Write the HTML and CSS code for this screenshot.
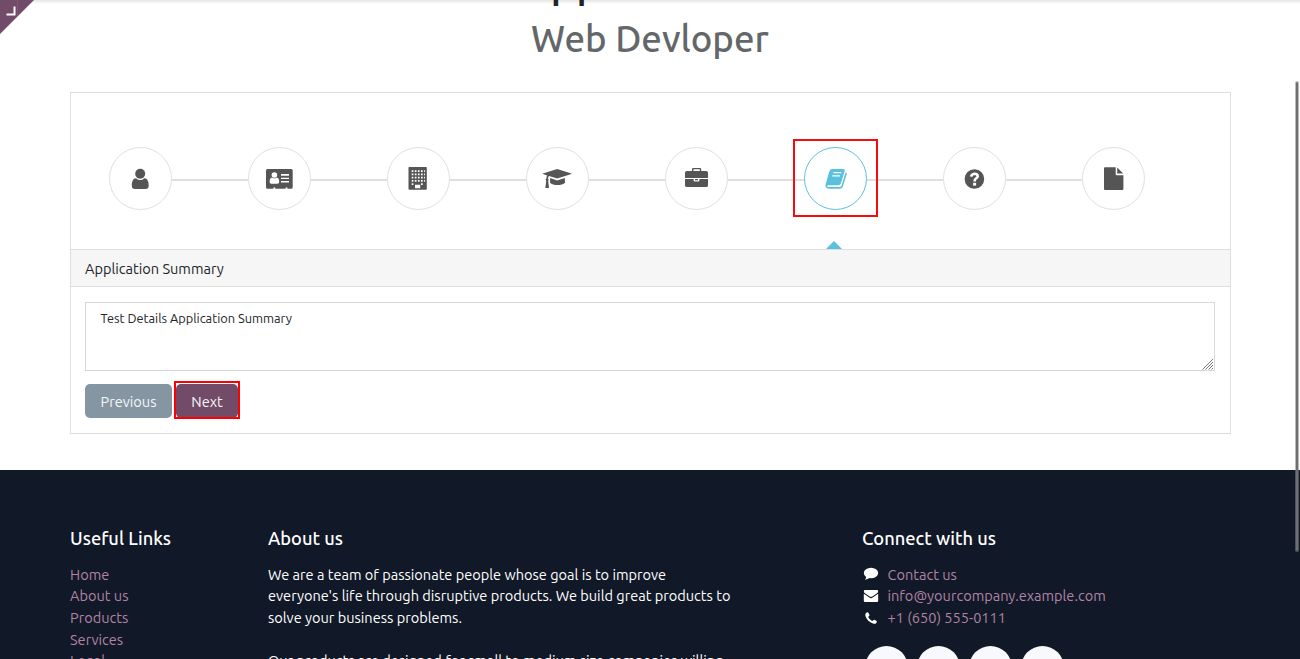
FILE: index.html
```
<!DOCTYPE html>
<html lang="en">
<head>
<meta charset="utf-8">
<title>Job Application Form</title>
<link rel="stylesheet" href="styles.css">
</head>
<body>
<div class="page">
  <div class="top-shadow"></div>
  <div class="corner"><svg width="34" height="34" viewBox="0 0 34 34"><path d="M0 0H34L0 34Z" fill="#714b67"/><path d="M17.5 0V16" stroke="#7c5973"/><path d="M6.5 14.5H14.5V6.5" fill="none" stroke="#fff" stroke-width="2"/></svg></div>
  <header class="heading">
    <h1 class="title">Job Application Form</h1>
    <h2 class="job">Web Devloper</h2>
  </header>

  <main class="card">
    <nav class="steps">
      <a class="step"><svg viewBox="0 0 63 63"><circle cx="31.2" cy="26.8" r="5"/><path d="M27 31.2Q31.2 35 35.4 31.2C38.5 31.2 39.7 34.5 39.7 38.5Q39.7 42 36.5 42H26Q22.8 42 22.8 38.5C22.8 34.5 24 31.2 27 31.2Z"/></svg></a>
      <i class="line"></i>
      <a class="step"><svg viewBox="0 0 63 63"><path d="M19.5 22H43.2Q44.7 22 44.7 23.5V40.3Q44.7 41.8 43.2 41.8H39.4V40.4H37.6V41.8H27.2V40.4H25.4V41.8H19.5Q18 41.8 18 40.3V23.5Q18 22 19.5 22Z"/><g fill="#fff"><circle cx="26.4" cy="28" r="2.8"/><path d="M24 30.4Q26.4 32.3 28.8 30.4Q31.2 30.8 31.2 34.7Q31.2 36.8 29.4 36.8H23.4Q21.6 36.8 21.6 34.7Q21.6 30.8 24 30.4ZM33 26.9H41V28.7H33ZM33 30.8H41V32.1H33ZM33 34.1H41V35.4H33Z"/></g></svg></a>
      <i class="line"></i>
      <a class="step"><svg viewBox="0 0 63 63"><rect x="21.5" y="20" width="18.3" height="22.7" rx=".8"/><g stroke="#fff" stroke-width="1.7" stroke-dasharray="1.7 1.4"><path d="M24.7 24.2H38M24.7 27.4H38M24.7 30.6H38M24.7 33.8H38"/></g><path d="M24.7 36.2H26.4V37.9H24.7ZM34 36.2H35.7V37.9H34ZM28 37.8H33.2V41.3H28Z" fill="#fff"/></svg></a>
      <i class="line"></i>
      <a class="step"><svg viewBox="0 0 63 63"><path d="M31.2 21.9L45.4 26.5Q46 26.8 45.4 27L31.2 31.6L23 29Q22.2 30 22 31.4Q23.3 32.5 22.2 33.9L23 41.1H19.3L20.2 33.9Q19 32.6 20.4 31.4Q20.5 29.6 21.2 28.4L17 27Q16.4 26.8 17 26.5ZM24.2 31.1L31.2 33.4L38.8 31L39 35.7C36 38.9 27 38.9 24 35.7Z"/></svg></a>
      <i class="line"></i>
      <a class="step"><svg viewBox="0 0 63 63"><path fill-rule="evenodd" d="M27 24V22.2Q27 21 28.2 21H35Q36.2 21 36.2 22.2V24H41.2Q43 24 43 25.7V30.9H20V25.7Q20 24 21.8 24ZM28.4 24H34.8V22.3H28.4ZM20 32H28.6V33.6Q28.6 34.6 29.6 34.6H33.3Q34.4 34.6 34.4 33.6V32H43V38.5Q43 40.1 41.2 40.1H21.8Q20 40.1 20 38.5Z"/><path d="M30 32H33V33.3H30Z"/></svg></a>
      <i class="line"></i>
      <a class="step active"><svg viewBox="0 0 63 63"><path d="M27.6 22H39.3Q41.2 22.1 40.7 24L36.9 36.3Q36.3 38.3 34.4 38.3H24.2Q22.8 38.5 23.2 39.5Q23.5 40.1 24.7 40.1H35.6Q37 40.1 37.5 38.7L41.3 26.2L41.8 25.2Q43.2 26 42.7 27.3L38.8 39.8Q38 41.8 36 41.8H25Q22.3 41.8 21.6 39.4Q21.2 38 21.9 36.5L25 25.2Q25.7 22.5 27.6 22Z"/><path d="M29.4 25.7H37.2M28.3 28.9H36.1" stroke="#fff" stroke-width="1.3"/></svg></a>
      <i class="line"></i>
      <a class="step"><svg viewBox="0 0 63 63"><circle cx="31.4" cy="32" r="9.8"/><path d="M28 29.6Q29.1 26.7 31.6 26.7Q34.7 26.8 34.7 29.3Q34.7 30.8 32.8 31.7Q31.6 32.4 31.6 34.5" fill="none" stroke="#fff" stroke-width="2.6"/><rect x="30.1" y="35.8" width="3" height="2.8" fill="#fff"/></svg></a>
      <i class="line"></i>
      <a class="step"><svg viewBox="0 0 63 63"><path d="M23 20.2H33.7V27.4Q33.7 28.2 34.5 28.2H41.4V42Q41.4 43.1 40.4 43.1H23Q22 43.1 22 42V21.2Q22 20.2 23 20.2ZM35.2 20.4L41.2 26.6H35.2Z"/></svg></a>
      <span class="pointer"></span>
      <span class="mark mark-step"></span>
    </nav>
    <div class="card-head">Application Summary</div>
    <div class="card-body">
      <div class="field">
        <textarea class="summary">Test Details Application Summary</textarea>
        <svg class="grip" width="12" height="12" viewBox="0 0 12 12"><path d="M.5 11.5L11 1M3.5 11.5L11 4M6.5 11.5L11 7M9.5 11.5L11 10" stroke="#777" fill="none"/></svg>
      </div>
      <div class="buttons">
        <button class="btn btn-prev">Previous</button>
        <button class="btn btn-next">Next<span class="mark mark-next"></span></button>
      </div>
    </div>
  </main>

  <footer class="footer">
    <section class="col-links">
      <h5>Useful Links</h5>
      <a>Home</a><a>About us</a><a>Products</a><a>Services</a><a>Legal</a>
    </section>
    <section class="col-about">
      <h5>About us</h5>
      <p>We are a team of passionate people whose goal is to improve<br>everyone's life through disruptive products. We build great products to<br>solve your business problems.</p>
      <p>Our products are designed for small to medium size companies willing</p>
    </section>
    <section class="col-connect">
      <h5>Connect with us</h5>
      <div class="contact"><svg viewBox="0 0 16 16"><ellipse cx="8" cy="7" rx="7.2" ry="5.3"/><path d="M3 9.5Q3.8 12 1.8 13.8Q5 13.5 7 11.5Z"/></svg><a>Contact us</a></div>
      <div class="contact"><svg viewBox="0 0 16 16"><path d="M2 2H14Q15.2 2 15.2 3.4Q15 4.5 13.8 5.4L9.3 8.6Q8 9.5 6.7 8.6L2.2 5.4Q.8 4.5.8 3.3Q.8 2 2 2ZM.8 5.7L6.3 9.6Q8 10.7 9.7 9.6L15.2 5.7V12.7Q15.2 14 14 14H2Q.8 14 .8 12.7Z"/></svg><a>info@yourcompany.example.com</a></div>
      <div class="contact"><svg viewBox="0 0 16 16"><path d="M4.5 2.3Q5.2 2.2 5.5 3L6.5 5Q6.7 5.6 6 6.1Q5 6.8 5.3 7.3Q6.5 9.8 9 11Q9.6 11.2 10.3 10.2Q10.8 9.5 11.4 9.8L13.2 10.8Q14 11.2 13.8 11.9C13.4 13.6 11.6 14.1 10 13.5C6.4 12.3 3.6 9.5 2.5 6.2C2 4.5 2.5 2.5 4.5 2.3Z"/></svg><a>+1 (650) 555-0111</a></div>
      <div class="socials"><i></i><i></i><i></i><i></i></div>
    </section>
  </footer>
  <div class="scroll-thumb"></div>
</div>
</body>
</html>
```
FILE: styles.css
```
* { box-sizing: border-box; }
body { margin: 0; font: 400 14.56px/21.7px Ubuntu, "Open Sans", sans-serif; color: #212529; background: #fff; }
.page { position: relative; height: 659px; overflow: hidden; display: flex; flex-direction: column; }
.top-shadow { position: absolute; top: 0; left: 0; right: 0; height: 4px; background: linear-gradient(rgba(0,0,0,.1), rgba(0,0,0,0)); z-index: 1; }
.corner { position: absolute; top: 0; left: 0; z-index: 2; height: 34px; }
.corner svg { display: block; }

.heading { height: 92px; flex: none; text-align: center; }
.title { margin: -47px 0 0; font-size: 43.6px; line-height: 58px; font-weight: 500; }
.job { margin: 3px 0 0; font-size: 36.6px; line-height: 50px; font-weight: 500; color: #646769; }

.card { width: 1161px; height: 342px; flex: none; margin-left: 70px; border: 1px solid #dedede; }
.steps { position: relative; height: 156px; display: flex; align-items: flex-start; padding: 54px 0 0 38px; }
.step { width: 63px; height: 63px; flex: none; border: 1px solid #e0e0e0; border-radius: 50%; fill: #555; }
.step svg { display: block; width: 63px; height: 63px; margin: -1px; }
.step.active { border-color: #5bc0de; fill: #5bc0de; }
.line { width: 76px; height: 2px; margin-top: 32px; background: #e0e0e0; flex: none; }
.pointer { position: absolute; left: 755px; top: 148px; border: 8px solid transparent; border-top: 0; border-bottom: 8px solid #5bc0de; }
.mark { position: absolute; border: 2px solid #f60c0c; }
.mark-step { left: 722px; top: 46px; width: 85px; height: 78px; }
.card-head { height: 38px; border-top: 1px solid #dedede; border-bottom: 1px solid #dedede; background: #f6f6f6; padding: 8px 14px; line-height: 22px; }
.card-body { padding: 15px 15px 0 14px; }
.field { position: relative; }
.summary { display: block; width: 1130px; height: 69px; margin: 0; padding: 6px 14.5px; border: 1px solid #d8d8d8; font: 12.78px/19px Ubuntu, "Open Sans", sans-serif; color: #212529; background: #fff; resize: none; outline: 0; }
.grip { position: absolute; right: 1px; bottom: 1px; }
.buttons { display: flex; gap: 4px; margin-top: 13px; }
.btn { position: relative; height: 34px; border: 0; border-radius: 5px; padding: 1px 0 0; font: 14.56px/21px Ubuntu, "Open Sans", sans-serif; color: #f6f6f6; }
.btn-prev { width: 87px; background: #8595a2; }
.btn-next { width: 62px; background: #714b67; }
.mark-next { left: -2px; top: -3px; width: 66px; height: 38px; border-color: #f00; }

.footer { flex: none; height: 189px; margin-top: 36px; padding: 57px 70px 0; background: #111827; display: flex; color: #fff; }
.footer h5 { margin: 0 0 13.65px; font-size: 18.3px; line-height: 23px; font-weight: 500; }
.footer a { display: block; color: #b084a5; white-space: nowrap; }
.col-links { width: 198px; flex: none; }
.col-about { width: 594px; flex: none; }
.col-about p { margin: 0 0 21.7px; white-space: nowrap; }
.contact { display: flex; align-items: center; gap: 8.5px; height: 21.7px; }
.contact svg { width: 16px; height: 16px; margin-left: 1px; fill: #fff; }
.socials { display: flex; gap: 9px; margin: 17.3px 0 0 3px; }
.socials i { width: 43px; height: 43px; border-radius: 50%; background: #f8f9fc; flex: none; }
.scroll-thumb { position: absolute; left: 1295px; top: 81px; width: 4px; height: 471px; border: 1px solid rgba(130,130,130,.55); border-radius: 2px; background: #6f6f6f; background-clip: padding-box; }
```
